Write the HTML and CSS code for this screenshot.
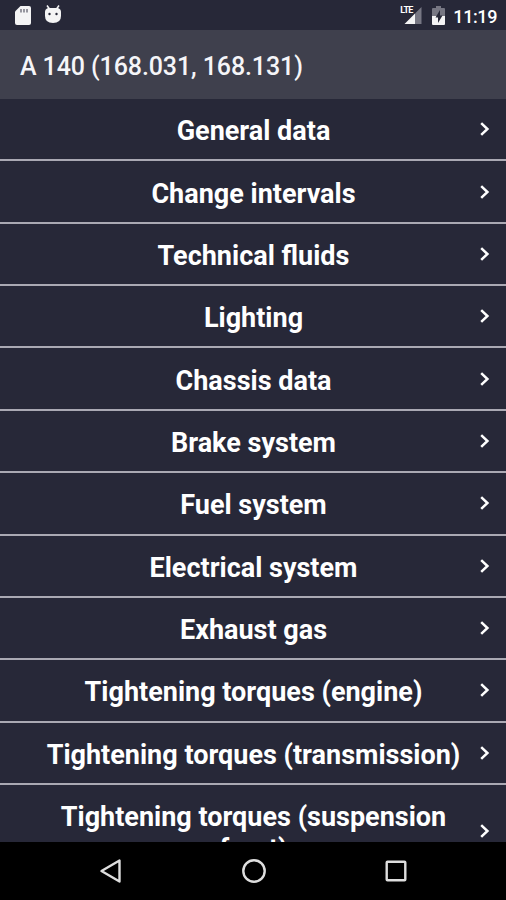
FILE: index.html
```html
<!DOCTYPE html>
<html lang="en">
<head>
<meta charset="utf-8">
<title>A 140</title>
<link rel="stylesheet" href="styles.css">
</head>
<body>
<svg class="defs" width="0" height="0"><symbol id="chev" viewBox="0 0 12 16"><path d="M2.2 2.2 8.4 8 2.2 13.8" fill="none" stroke="#fff" stroke-width="2.5"/></symbol></svg>
<div class="screen">
  <div class="status">
    <svg class="sd" viewBox="0 0 16 19" width="16" height="19"><path d="M5.5 0H14q2 0 2 2v15q0 2-2 2H2q-2 0-2-2V5.500Z" fill="#f4f4f5"/><path d="M6 3v3.500M9 3v3.500M12 3v3.500" stroke="#777783" stroke-width="1.500"/></svg>
    <svg class="bot" viewBox="0 0 18 19" width="18" height="19"><path d="M3 .5 5.500 4M15 .5 12.500 4" stroke="#f4f4f5" stroke-width="1.500"/><path d="M1 7q0-3 3-4h10q3 1 3 4v4q0 7-8 7t-8-7Z" fill="#f4f4f5"/><circle cx="5.500" cy="9" r="1.200" fill="#272838"/><circle cx="12.500" cy="9" r="1.200" fill="#272838"/></svg>
    <div class="right">
      <div class="signal"><svg viewBox="0 0 22 19" width="22" height="19"><path d="M21.500 1V18H15V7.500Z" fill="#777783"/><path d="M15 7.500V18H4.500Z" fill="#f4f4f5"/></svg><span class="lte">LTE</span></div>
      <svg class="battery" viewBox="0 0 13 19" width="13" height="19"><path d="M4 0h5v2h3q1 0 1 1v7H0V3q0-1 1-1h3Z" fill="#777783"/><path d="M0 10h13v8q0 1-1 1H1q-1 0-1-1Z" fill="#f4f4f5"/><path d="M8 4 3.500 11.500H6V17l4.500-7.500H8Z" fill="#272838"/></svg>
      <span class="clock">11:19</span>
    </div>
  </div>
  <header class="header"><h1>A 140 (168.031, 168.131)</h1></header>
  <main class="list">
    <div class="row"><span>General data</span><svg><use href="#chev"/></svg></div>
    <div class="row"><span>Change intervals</span><svg><use href="#chev"/></svg></div>
    <div class="row"><span>Technical fluids</span><svg><use href="#chev"/></svg></div>
    <div class="row"><span>Lighting</span><svg><use href="#chev"/></svg></div>
    <div class="row"><span>Chassis data</span><svg><use href="#chev"/></svg></div>
    <div class="row"><span>Brake system</span><svg><use href="#chev"/></svg></div>
    <div class="row"><span>Fuel system</span><svg><use href="#chev"/></svg></div>
    <div class="row"><span>Electrical system</span><svg><use href="#chev"/></svg></div>
    <div class="row"><span>Exhaust gas</span><svg><use href="#chev"/></svg></div>
    <div class="row"><span>Tightening torques (engine)</span><svg><use href="#chev"/></svg></div>
    <div class="row"><span>Tightening torques (transmission)</span><svg><use href="#chev"/></svg></div>
    <div class="row"><span>Tightening torques (suspension front)</span><svg><use href="#chev"/></svg></div>
  </main>
  <nav class="nav">
    <svg viewBox="0 0 24 26" width="24" height="26"><path d="M20.500 2.500V23.500L2.500 13Z" fill="none" stroke="#dedede" stroke-width="2.400" stroke-linejoin="round"/></svg>
    <svg viewBox="0 0 26 26" width="26" height="26"><circle cx="13" cy="13" r="10.700" fill="none" stroke="#dedede" stroke-width="2.400"/></svg>
    <svg viewBox="0 0 24 26" width="24" height="26"><rect x="2.700" y="3.700" width="18.600" height="18.600" rx=".8" fill="none" stroke="#dedede" stroke-width="2.400"/></svg>
  </nav>
</div>
</body>
</html>
```
FILE: styles.css
```css
* { box-sizing: border-box; }
body { margin: 0; background: #000; font-family: Roboto, sans-serif; color: #fff; }
.defs { display: block; }
.screen { width: 506px; height: 900px; display: flex; flex-direction: column; overflow: hidden; background: #272838; }
.status { flex: none; height: 30px; display: flex; align-items: flex-start; padding: 6px 9px 0 15px; }
.bot { margin-left: 13px; margin-top: -1px; }
.right { margin-left: auto; display: flex; align-items: flex-start; }
.signal { position: relative; width: 22px; height: 19px; margin-right: 10px; }
.signal svg { display: block; }
.lte { position: absolute; left: 0; top: 0; font-size: 9px; line-height: 9px; font-weight: 700; letter-spacing: -.8px; }
.clock { margin-left: 8px; font-size: 18px; line-height: 21px; font-weight: 500; letter-spacing: -.4px; }
.header { flex: none; height: 69px; background: #3f404d; display: flex; align-items: center; padding: 4px 20px 0; }
.header h1 { margin: 0; font-size: 25px; line-height: 30px; font-weight: 500; letter-spacing: -.1px; color: #f5f5f8; white-space: nowrap; }
.list { flex: 1; min-height: 0; overflow: hidden; }
.row { min-height: 62.37px; display: flex; align-items: center; padding: 16px 15px 12px 41px; border-bottom: 2px solid #aaa9b3; font-size: 27px; line-height: 32px; font-weight: 700; }
.row span { flex: 1; text-align: center; padding-right: 13px; }
.row svg { flex: none; width: 12px; height: 16px; margin-top: -4px; }
.nav { flex: none; height: 58px; background: #000; display: flex; justify-content: space-between; align-items: center; padding: 0 98px 0 99px; }
```
